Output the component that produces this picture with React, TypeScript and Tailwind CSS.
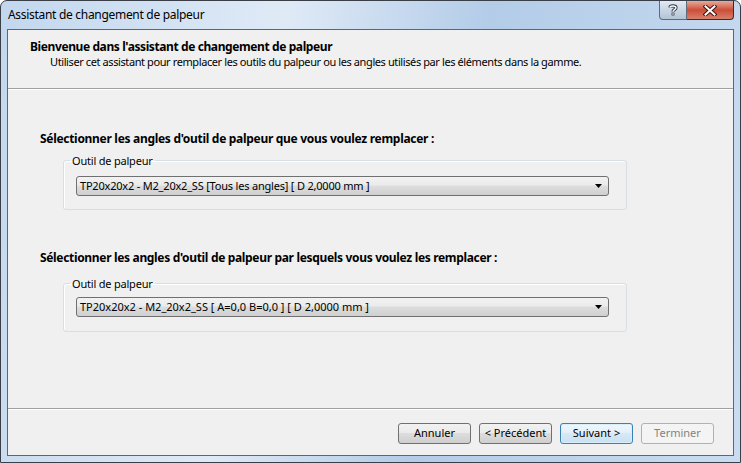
import React from 'react'

const font = { fontFamily: '"Noto Sans", "Open Sans", sans-serif' }

function TitleButtons() {
  return (
    <div className="flex h-[19px] self-start mr-[6px]">
      <div className="w-[28px] h-full border border-[#5f6b78] border-t-0 rounded-bl-[4px] bg-gradient-to-b from-[#e3ebf4] via-[#c9d6e4] to-[#b4c4d6] flex items-center justify-center">
        <svg width="10" height="12" viewBox="0 0 10 12">
          <path d="M2 3.5 C2 1.5 8 1.2 8 3.8 C8 5.6 5 5.6 5 7.6" fill="none" stroke="#2b3440" strokeWidth="3.2" />
          <path d="M2 3.5 C2 1.5 8 1.2 8 3.8 C8 5.6 5 5.6 5 7.6" fill="none" stroke="#ffffff" strokeWidth="1.4" />
          <rect x="3.6" y="8.6" width="2.8" height="2.8" fill="#2b3440" />
          <rect x="4.3" y="9.3" width="1.4" height="1.4" fill="#ffffff" />
        </svg>
      </div>
      <div className="w-[47px] h-full border border-[#5a2018] border-t-0 border-l-0 rounded-br-[4px] bg-gradient-to-b from-[#e6a99c] via-[#cb4d36] to-[#d6806c] flex items-center justify-center">
        <svg width="14" height="11" viewBox="0 0 14 11">
          <path d="M2.5 1.5 L11.5 9.5 M11.5 1.5 L2.5 9.5" stroke="#3d1610" strokeWidth="4" strokeLinecap="square" />
          <path d="M2.5 1.5 L11.5 9.5 M11.5 1.5 L2.5 9.5" stroke="#ffffff" strokeWidth="2" strokeLinecap="square" />
        </svg>
      </div>
    </div>
  )
}

function Combo({ value, track }: { value: string; track: string }) {
  return (
    <div className="h-[20px] ml-[12px] mr-[17px] border border-[#707070] rounded-[3px] bg-[linear-gradient(#f2f2f2_0%,#ebebeb_45%,#dddddd_50%,#cfcfcf_100%)] flex items-center pl-[3px] pr-[6px]">
      <span className={`flex-1 text-[11px] text-black whitespace-nowrap ${track}`}>{value}</span>
      <svg width="7" height="4" viewBox="0 0 7 4">
        <path d="M0 0 H7 L3.5 4 Z" fill="#000" />
      </svg>
    </div>
  )
}

function Group({ value, pad, track }: { value: string; pad: string; track: string }) {
  return (
    <fieldset className={`ml-[55px] w-[564px] border border-[#d5dfe5] rounded-[3px] shadow-[inset_1px_1px_0_#ffffff] ${pad}`}>
      <legend className="ml-[6px] px-[2px] text-[11px] tracking-[-0.2px] text-black leading-[15px]">Outil de palpeur</legend>
      <Combo value={value} track={track} />
    </fieldset>
  )
}

function Btn({ label, kind }: { label: string; kind?: 'default' | 'disabled' }) {
  const cls =
    kind === 'default'
      ? 'border-[#3c7fb1] bg-[linear-gradient(#f0f7fc_0%,#e4f0f9_45%,#d6e9f6_50%,#c9e1f2_100%)] text-black shadow-[inset_0_0_0_1px_#d8eefb]'
      : kind === 'disabled'
        ? 'border-[#adb2b5] bg-[#f4f4f4] text-[#838383]'
        : 'border-[#707070] bg-[linear-gradient(#f2f2f2_0%,#ebebeb_45%,#dddddd_50%,#cfcfcf_100%)] text-black'
  return (
    <div className={`w-[73px] h-[21px] border rounded-[3px] flex items-center justify-center text-[11px] ${cls}`}>
      {label}
    </div>
  )
}

export default function App() {
  return (
    <div
      style={font}
      className="w-[741px] h-[463px] border border-[#393e47] rounded-t-[7px] bg-[linear-gradient(100deg,#c2d7ee_0%,#dfeaf6_35%,#b3cce8_60%,#c9dcf1_100%)] flex flex-col px-[6px] pb-[6px]"
    >
      <div className="h-[28px] flex items-start justify-between -mr-[6px]">
        <div className="pl-[1px] pt-[6px] text-[12px] tracking-[-0.3px] text-black leading-[15px]">Assistant de changement de palpeur</div>
        <TitleButtons />
      </div>

      <div className="flex-1 border border-[#5d6774] bg-[#f0f0f0] flex flex-col">
        <div className="h-[59px] shrink-0 pl-[22px] pt-[9px] border-b border-[#a0a0a0]">
          <div className="text-[12px] font-bold tracking-[-0.4px] leading-[15px] text-black">
            Bienvenue dans l'assistant de changement de palpeur
          </div>
          <div className="pl-[20px] text-[11px] tracking-[-0.4px] leading-[15px] text-black">
            Utiliser cet assistant pour remplacer les outils du palpeur ou les angles utilisés par les éléments dans la gamme.
          </div>
        </div>

        <div className="flex-1 border-t border-white border-b border-b-[#a0a0a0] pt-[41px]">
          <div className="pl-[32px] text-[12px] font-bold tracking-[-0.3px] leading-[15px] text-black">
            Sélectionner les angles d'outil de palpeur que vous voulez remplacer :
          </div>
          <div className="mt-[7px]">
            <Group
              value="TP20x20x2 - M2_20x2_SS [Tous les angles] [ D 2,0000 mm ]"
              pad="pt-[8px] pb-[13px]"
              track="tracking-[-0.2px]"
            />
          </div>
          <div className="mt-[40px] pl-[32px] text-[12px] font-bold tracking-[-0.33px] leading-[15px] text-black">
            Sélectionner les angles d'outil de palpeur par lesquels vous voulez les remplacer :
          </div>
          <div className="mt-[11px]">
            <Group
              value="TP20x20x2 - M2_20x2_SS [ A=0,0 B=0,0 ] [ D 2,0000 mm ]"
              pad="pt-[6px] pb-[14px]"
              track="tracking-[0px]"
            />
          </div>
        </div>

        <div className="h-[46px] shrink-0 border-t border-white flex justify-end items-start gap-[8px] pt-[13px] pr-[19px]">
          <Btn label="Annuler" />
          <Btn label="< Précédent" />
          <Btn label="Suivant >" kind="default" />
          <Btn label="Terminer" kind="disabled" />
        </div>
      </div>
    </div>
  )
}
